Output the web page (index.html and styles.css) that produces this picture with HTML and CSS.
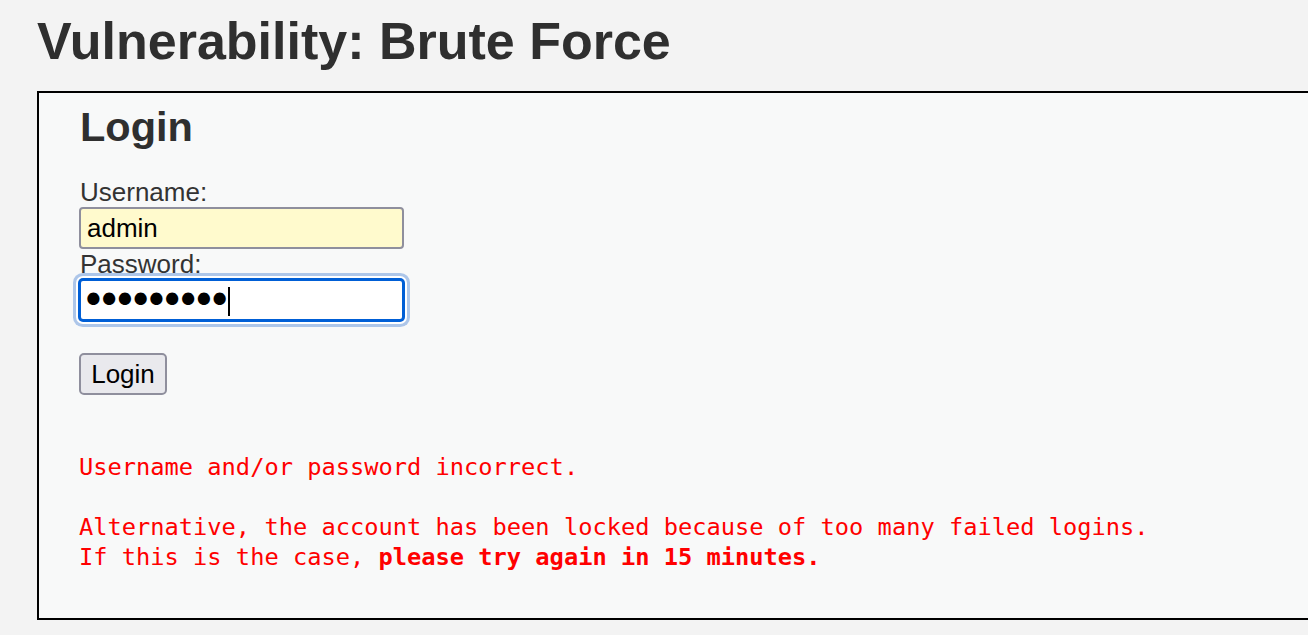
FILE: index.html
```html
<!DOCTYPE html>
<html lang="en">
<head>
<meta charset="utf-8">
<title>Vulnerability: Brute Force</title>
<link rel="stylesheet" href="styles.css">
</head>
<body>
<div class="page">
  <h1 class="title">Vulnerability: Brute Force</h1>
  <div class="vuln-box">
    <form class="login-form" action="#" method="GET">
      <h2 class="form-title">Login</h2>
      <label class="field-label" for="username">Username:</label>
      <input class="text-input autofilled" type="text" id="username" name="username" value="admin">
      <label class="field-label" for="password">Password:</label>
      <span class="input-wrap">
        <input class="text-input focused" type="password" id="password" name="password" value="password1">
        <span class="caret"></span>
      </span>
      <button class="login-btn" type="button">Login</button>
    </form>
    <pre class="error-msg">Username and/or password incorrect.

Alternative, the account has been locked because of too many failed logins.
If this is the case, <strong>please try again in 15 minutes.</strong></pre>
  </div>
</div>
</body>
</html>
```
FILE: styles.css
```css
html, body {
  margin: 0;
  padding: 0;
  overflow: hidden;
}

body {
  background: #f3f3f3;
  font-family: "Liberation Sans", Arial, sans-serif;
  color: #333333;
}

.page {
  padding-left: 37px;
}

.title {
  margin: 11px 0 20px 0;
  font-size: 52px;
  line-height: 60px;
  font-weight: bold;
  color: #2f2f2f;
}

.vuln-box {
  width: 1320px;
  background: #f8f9f9;
  border: 2px solid #000000;
  padding: 10px 40px 46px 40px;
}

.login-form {
  display: flex;
  flex-direction: column;
  align-items: flex-start;
}

.form-title {
  margin: 0 0 26px 1px;
  font-size: 41.5px;
  line-height: 48px;
  font-weight: bold;
  color: #2f2f2f;
}

.field-label {
  font-size: 26px;
  line-height: 30px;
  color: #333333;
  margin-left: 1px;
}

.text-input {
  box-sizing: border-box;
  display: block;
  width: 325px;
  height: 42px;
  margin: 0;
  padding: 4px 6px;
  border: 2px solid #8f8f9d;
  border-radius: 4px;
  font-family: "Liberation Sans", Arial, sans-serif;
  font-size: 26px;
  color: #000000;
  background: #ffffff;
}

.autofilled {
  background: #fffacd;
}

.input-wrap {
  position: relative;
  display: block;
}

.focused {
  border-color: #005fd6;
  outline: none;
  box-shadow: 0 0 0 1px #005fd6, 0 0 0 3px #ffffff, 0 0 0 6px #adc6e9;
  font-family: "DejaVu Sans", sans-serif;
  font-size: 42px;
  letter-spacing: -9px;
  padding: 0 4px 0 0;
}

.caret {
  position: absolute;
  left: 149px;
  top: 8px;
  width: 2px;
  height: 29px;
  background: #000000;
}

.login-btn {
  box-sizing: border-box;
  margin-top: 32px;
  width: 88px;
  height: 42px;
  padding: 0;
  border: 2px solid #8f8f9d;
  border-radius: 5px;
  background: #e9e9ed;
  font-family: "Liberation Sans", Arial, sans-serif;
  font-size: 26px;
  color: #000000;
}

.error-msg {
  margin: 57px 0 0 0;
  font-family: "DejaVu Sans Mono", "Liberation Mono", monospace;
  font-size: 23.7px;
  line-height: 30px;
  color: #ff0000;
}

.error-msg strong {
  font-weight: bold;
}
```
